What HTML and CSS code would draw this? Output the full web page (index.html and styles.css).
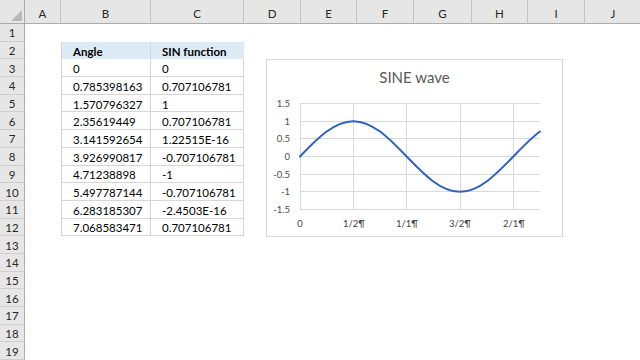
FILE: index.html
```html
<!DOCTYPE html>
<html>
<head>
    <title>SINE wave</title>
    <meta name="viewport" content="width=device-width, initial-scale=1.0">
    <link rel="stylesheet" href="styles.css">
</head>
<body>
    <div class="sheet">
        <div class="corner"></div>
        <div class="colhead">A</div>
        <div class="colhead">B</div>
        <div class="colhead">C</div>
        <div class="colhead">D</div>
        <div class="colhead">E</div>
        <div class="colhead">F</div>
        <div class="colhead">G</div>
        <div class="colhead">H</div>
        <div class="colhead">I</div>
        <div class="colhead">J</div>

        <div class="rowhead">1</div>
        <div class="rowhead">2</div>
        <div class="rowhead">3</div>
        <div class="rowhead">4</div>
        <div class="rowhead">5</div>
        <div class="rowhead">6</div>
        <div class="rowhead">7</div>
        <div class="rowhead">8</div>
        <div class="rowhead">9</div>
        <div class="rowhead">10</div>
        <div class="rowhead">11</div>
        <div class="rowhead">12</div>
        <div class="rowhead">13</div>
        <div class="rowhead">14</div>
        <div class="rowhead">15</div>
        <div class="rowhead">16</div>
        <div class="rowhead">17</div>
        <div class="rowhead">18</div>
        <div class="rowhead">19</div>

        <!-- B2:C12 -->
        <div class="range">
            <div class="cell th">Angle</div><div class="cell th">SIN function</div>
            <div class="cell">0</div><div class="cell">0</div>
            <div class="cell">0.785398163</div><div class="cell">0.707106781</div>
            <div class="cell">1.570796327</div><div class="cell">1</div>
            <div class="cell">2.35619449</div><div class="cell">0.707106781</div>
            <div class="cell">3.141592654</div><div class="cell">1.22515E-16</div>
            <div class="cell">3.926990817</div><div class="cell">-0.707106781</div>
            <div class="cell">4.71238898</div><div class="cell">-1</div>
            <div class="cell">5.497787144</div><div class="cell">-0.707106781</div>
            <div class="cell">6.283185307</div><div class="cell">-2.4503E-16</div>
            <div class="cell">7.068583471</div><div class="cell">0.707106781</div>
        </div>

        <!-- chart floats over the cells -->
        <div class="chart">
            <svg class="plot" width="295" height="176" viewBox="1 1 295 176">
                <text class="title" x="148.5" y="24">SINE wave</text>
                <g class="grid">
                    <line x1="34" y1="44.5" x2="274" y2="44.5"/>
                    <line x1="34" y1="62.5" x2="274" y2="62.5"/>
                    <line x1="34" y1="79.5" x2="274" y2="79.5"/>
                    <line x1="34" y1="97.5" x2="274" y2="97.5"/>
                    <line x1="34" y1="115.5" x2="274" y2="115.5"/>
                    <line x1="34" y1="132.5" x2="274" y2="132.5"/>
                    <line x1="34" y1="150.5" x2="274" y2="150.5"/>
                    <line x1="34.5" y1="44" x2="34.5" y2="151"/>
                    <line x1="87.5" y1="44" x2="87.5" y2="151"/>
                    <line x1="140.5" y1="44" x2="140.5" y2="151"/>
                    <line x1="194.5" y1="44" x2="194.5" y2="151"/>
                    <line x1="247.5" y1="44" x2="247.5" y2="151"/>
                </g>
                <g class="ylabels">
                    <text x="24" y="48">1.5</text>
                    <text x="24" y="66">1</text>
                    <text x="24" y="83">0.5</text>
                    <text x="24" y="101">0</text>
                    <text x="24" y="119">-0.5</text>
                    <text x="24" y="136">-1</text>
                    <text x="24" y="154">-1.5</text>
                </g>
                <g class="xlabels">
                    <text x="34" y="168">0</text>
                    <text x="88" y="168">1/2¶</text>
                    <text x="141" y="168">1/1¶</text>
                    <text x="194" y="168">3/2¶</text>
                    <text x="248" y="168">2/1¶</text>
                </g>
                <path class="wave" d="M34 97.5 C51.39 79.4 68.03 62.17 87.33 62.17 S123.27 79.4 140.67 97.5 S174.7 132.83 194 132.83 S229.94 115.6 247.33 97.5 C256.22 88.25 265.11 79.06 274 72.52"/>
            </svg>
        </div>
    </div>
</body>
</html>
```

FILE: styles.css
```css
* {
    box-sizing: border-box;
}

body {
    margin: 0;
    background-color: #ffffff;
    font-family: 'Lato', 'Liberation Sans', sans-serif;
    font-size: 11.5px;
    color: #000;
    overflow: hidden;
}

.sheet {
    position: relative;
    display: grid;
    grid-template-columns: 25px 36px 90px 93px 57px 56px 57px 58px 56px 57px 57px;
    grid-template-rows: 24px repeat(19, 17.7px);
    width: 640px;
    height: 360px;
    overflow: hidden;
}

/* top left corner with the select-all triangle */
.corner {
    background-color: #e6e6e6;
    border-right: 1px solid #ababab;
    border-bottom: 1px solid #ababab;
    display: flex;
    justify-content: flex-end;
    align-items: flex-end;
    padding: 0 2px 2px 0;
}

.corner:after {
    content: '';
    width: 0;
    height: 0;
    border-left: 11px solid transparent;
    border-bottom: 11px solid #b8b8b8;
}

.colhead {
    background-color: #e6e6e6;
    border-right: 1px solid #c4c4c4;
    border-bottom: 1px solid #ababab;
    color: #262626;
    display: flex;
    justify-content: center;
    align-items: center;
    padding-top: 3px;
}

.rowhead {
    grid-column: 1;
    background-color: #e6e6e6;
    border-right: 1px solid #ababab;
    border-bottom: 1px solid #cfcfcf;
    color: #262626;
    display: flex;
    justify-content: center;
    align-items: center;
    padding-top: 1px;
}

.range {
    grid-column: 3 / 5;
    grid-row: 3 / 14;
    display: grid;
    grid-template-columns: 90px 93px;
    grid-template-rows: repeat(11, 1fr);
}

.cell {
    border-right: 1px solid #d6d6d6;
    border-bottom: 1px solid #d6d6d6;
    padding: 2px 0 0 11px;
    display: flex;
    align-items: center;
    white-space: nowrap;
}

.cell:nth-child(odd) {
    border-left: 1px solid #d6d6d6;
}

.th {
    background-color: #ddebf7;
    font-weight: bold;
    border-color: #ddebf7;
}

.th:nth-child(odd) {
    border-right-color: #c9d9e8;
}

.chart {
    position: absolute;
    left: 266px;
    top: 59px;
    width: 297px;
    height: 178px;
    border: 1px solid #d9d9d9;
    background-color: #fff;
}

.plot {
    display: block;
    font-family: 'Lato', 'Liberation Sans', sans-serif;
}

.title {
    font-size: 15px;
    fill: #595959;
    text-anchor: middle;
}

.grid line {
    stroke: #d9d9d9;
    stroke-width: 1;
    shape-rendering: crispEdges;
}

.ylabels text {
    font-size: 9.5px;
    fill: #4d4d4d;
    text-anchor: end;
}

.xlabels text {
    font-size: 9.5px;
    fill: #404040;
    text-anchor: middle;
}

.wave {
    fill: none;
    stroke: #2f60c4;
    stroke-width: 2;
    stroke-linecap: round;
}
```
